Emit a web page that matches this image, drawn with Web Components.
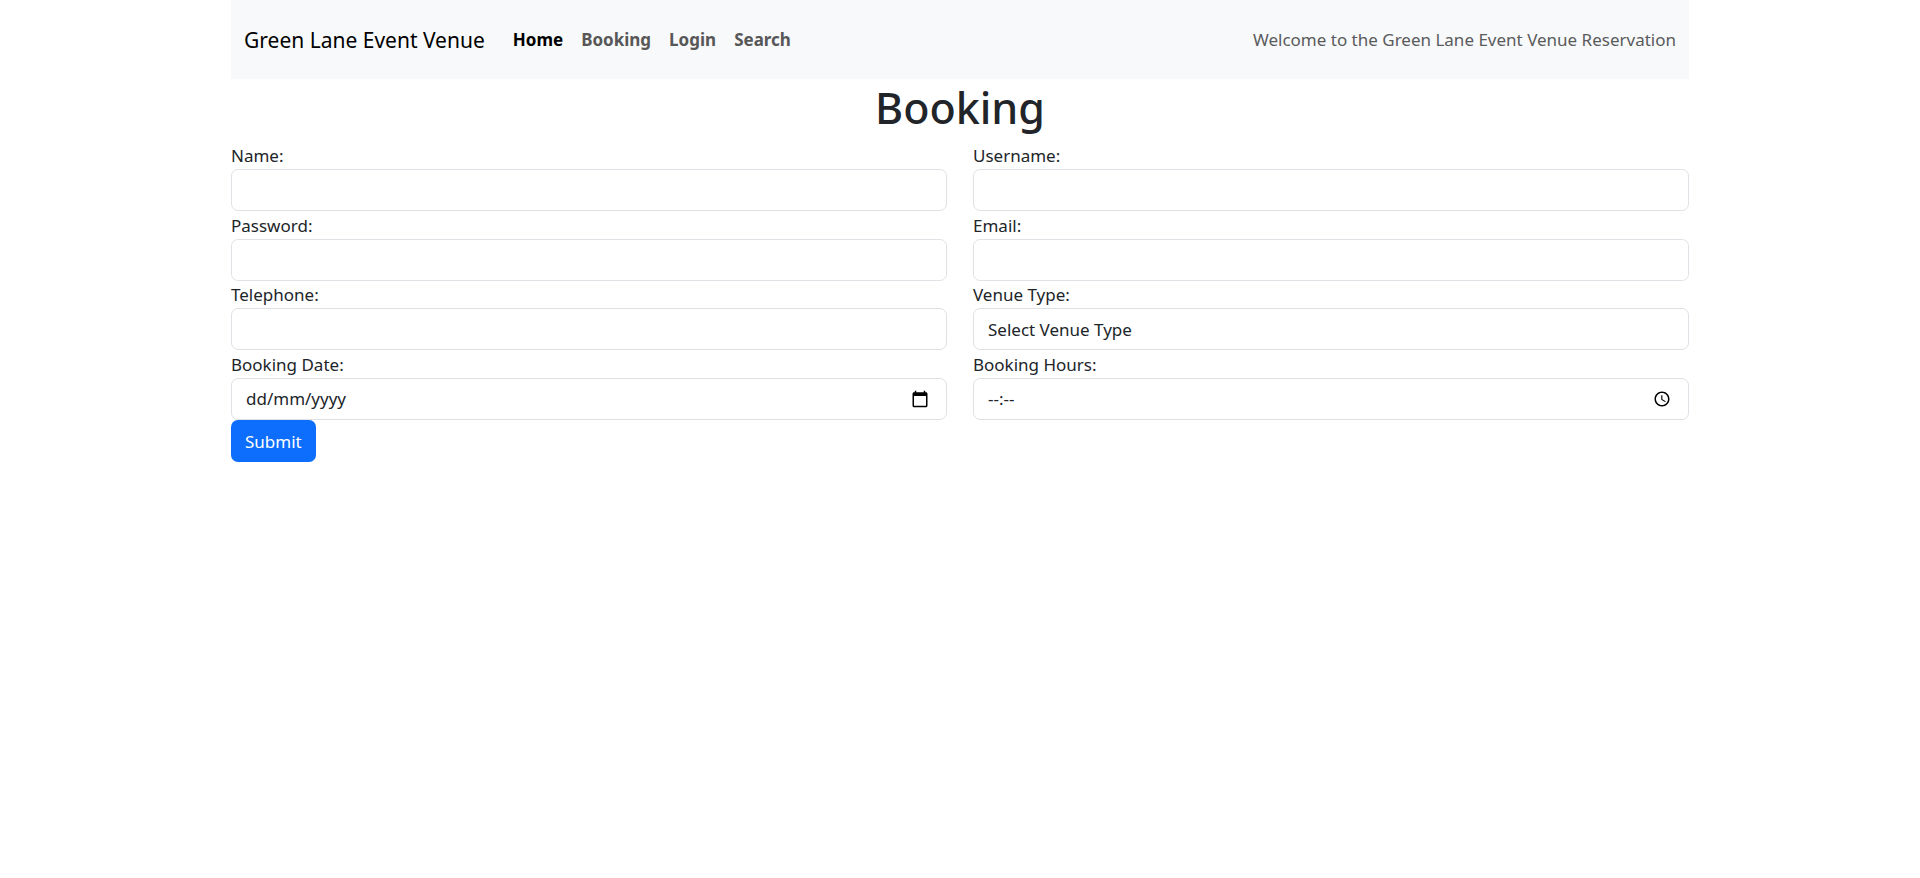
<!DOCTYPE html>
<html lang="en">
<head>
<meta charset="utf-8">
<meta name="viewport" content="width=device-width, initial-scale=1">
<title>Green Lane Event Venue - Booking</title>
<style>
  body {
    margin: 0;
    background: #fff;
    color: #212529;
    font: 400 17px/27px "Noto Sans", "Open Sans", sans-serif;
  }
</style>
</head>
<body>
<booking-page></booking-page>

<script>
const reset = '*, *::before, *::after { box-sizing: border-box; }';

class VenueNav extends HTMLElement {
  constructor() {
    super();
    this.attachShadow({ mode: 'open' }).innerHTML = `
      <style>
        ${reset}
        :host { display: block; }
        nav {
          display: flex;
          flex-wrap: wrap;
          align-items: center;
          min-height: 79px;
          padding: 9px 13px;
          background: #f8f9fa;
        }
        a { text-decoration: none; }
        .brand { margin-right: 19px; color: #000; font-size: 21px; line-height: 34px; }
        .links { display: flex; flex: 1; flex-wrap: wrap; margin: 0; padding: 0; list-style: none; }
        .welcome { color: #5a5b5d; }
      </style>
      <nav aria-label="Main">
        <a class="brand" href="#">Green Lane Event Venue</a>
        <div class="links" role="list"><slot></slot></div>
        <span class="welcome"><slot name="welcome"></slot></span>
      </nav>`;
  }
}

class NavItem extends HTMLElement {
  constructor() {
    super();
    const active = this.hasAttribute('active');
    this.attachShadow({ mode: 'open' }).innerHTML = `
      <style>
        :host { display: block; }
        a { display: block; padding: 9px; color: #575757; font-weight: 700; text-decoration: none; }
        a[aria-current] { color: #000; }
      </style>
      <a href="${this.getAttribute('href')}" ${active ? 'aria-current="page"' : ''}><slot></slot></a>`;
    this.setAttribute('role', 'listitem');
  }
}

const icons = {
  date: `<svg viewBox="0 0 24 24" aria-hidden="true"><path d="M20 3h-1V1h-2v2H7V1H5v2H4c-1.1 0-2 .9-2 2v16c0 1.1.9 2 2 2h16c1.100 0 2-.9 2-2V5c0-1.100-.9-2-2-2zm0 18H4V8h16v13z"/></svg>`,
  time: `<svg viewBox="0 0 24 24" aria-hidden="true"><path d="M11.990 2C6.470 2 2 6.480 2 12s4.470 10 9.990 10C17.520 22 22 17.520 22 12S17.520 2 11.990 2zM12 20c-4.420 0-8-3.580-8-8s3.580-8 8-8 8 3.580 8 8-3.580 8-8 8zm.5-13H11v6l5.250 3.150.75-1.230-4.500-2.670z"/></svg>`
};

class FormField extends HTMLElement {
  constructor() {
    super();
    const label = this.getAttribute('label');
    const type = this.getAttribute('type') || 'text';
    const hint = this.getAttribute('placeholder') || '';
    let control;
    if (type === 'select') {
      control = `<select id="control"><option>${hint}</option><option>Wedding</option><option>Conference</option><option>Party</option></select>`;
    } else if (icons[type]) {
      control = `<input id="control" type="text" inputmode="numeric" placeholder="${hint}">
        <button type="button" aria-label="Choose ${type}">${icons[type]}</button>`;
    } else {
      control = `<input id="control" type="${type}">`;
    }
    this.attachShadow({ mode: 'open' }).innerHTML = `
      <style>
        ${reset}
        :host { display: block; min-width: 0; }
        label { display: block; width: fit-content; }
        .control {
          display: flex;
          align-items: center;
          border: 1px solid #dee2e6;
          border-radius: 7px;
          background: #fff;
        }
        .control:focus-within { border-color: #86b7fe; box-shadow: 0 0 0 4px rgba(13, 110, 253, .25); }
        input, select {
          appearance: none;
          flex: 1;
          min-width: 0;
          height: 40px;
          margin: 0;
          padding: 0 14px;
          border: 0;
          border-radius: 6px;
          outline: 0;
          background: transparent;
          color: #212529;
          font: inherit;
        }
        input::placeholder { color: #212529; opacity: 1; }
        button { display: flex; margin: 0 17px 0 0; padding: 0; border: 0; background: none; color: #000; cursor: pointer; }
        svg { width: 18px; height: 18px; fill: currentColor; }
      </style>
      <label for="control">${label}</label>
      <div class="control">${control}</div>`;
  }
}

class BookingForm extends HTMLElement {
  constructor() {
    super();
    this.attachShadow({ mode: 'open' }).innerHTML = `
      <style>
        ${reset}
        :host { display: block; }
        .fields {
          display: grid;
          grid-template-columns: repeat(2, minmax(0, 1fr));
          column-gap: 26px;
          min-height: 278px;
        }
        button {
          display: block;
          height: 42px;
          padding: 0 14px;
          border: 0;
          border-radius: 7px;
          background: #0d6efd;
          color: #fff;
          font: inherit;
          cursor: pointer;
        }
        @media (max-width: 700px) { .fields { grid-template-columns: minmax(0, 1fr); } }
      </style>
      <form>
        <div class="fields"><slot></slot></div>
        <button type="submit">Submit</button>
      </form>`;
  }
}

class BookingPage extends HTMLElement {
  constructor() {
    super();
    this.attachShadow({ mode: 'open' }).innerHTML = `
      <style>
        ${reset}
        :host { display: block; max-width: 1458px; margin: 0 auto; }
        h1 { margin: 0 0 5px; font-size: 43px; font-weight: 500; line-height: 58px; text-align: center; }
      </style>
      <venue-nav>
        <nav-item href="#home" active>Home</nav-item>
        <nav-item href="#booking">Booking</nav-item>
        <nav-item href="#login">Login</nav-item>
        <nav-item href="#search">Search</nav-item>
        <span slot="welcome">Welcome to the Green Lane Event Venue Reservation</span>
      </venue-nav>
      <main>
        <h1>Booking</h1>
        <booking-form>
          <form-field label="Name:"></form-field>
          <form-field label="Username:"></form-field>
          <form-field label="Password:" type="password"></form-field>
          <form-field label="Email:" type="email"></form-field>
          <form-field label="Telephone:" type="tel"></form-field>
          <form-field label="Venue Type:" type="select" placeholder="Select Venue Type"></form-field>
          <form-field label="Booking Date:" type="date" placeholder="dd/mm/yyyy"></form-field>
          <form-field label="Booking Hours:" type="time" placeholder="--:--"></form-field>
        </booking-form>
      </main>`;
  }
}

customElements.define('nav-item', NavItem);
customElements.define('venue-nav', VenueNav);
customElements.define('form-field', FormField);
customElements.define('booking-form', BookingForm);
customElements.define('booking-page', BookingPage);
</script>
</body>
</html>
